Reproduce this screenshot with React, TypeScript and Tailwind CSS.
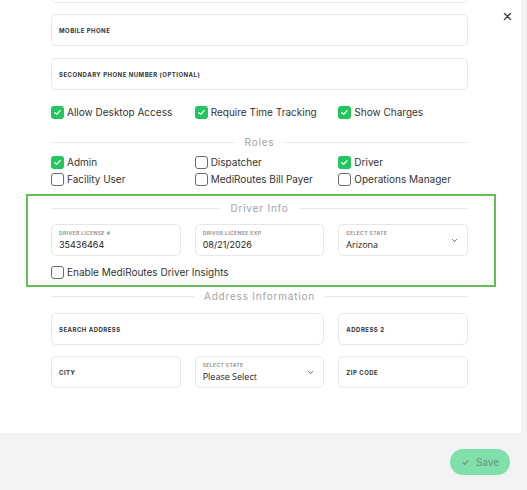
import React from 'react';

const font = { fontFamily: 'Inter, "Liberation Sans", sans-serif' };

const Check = ({ on }: { on?: boolean }) => (
  <span
    className={`flex h-[13px] w-[13px] shrink-0 items-center justify-center rounded-[3px] ${
      on ? 'bg-[#22c55e]' : 'border border-[#6b6b6b] bg-white'
    }`}
  >
    {on && (
      <svg viewBox="0 0 12 12" className="h-[9px] w-[9px]" fill="none" stroke="white" strokeWidth="1.8" strokeLinecap="round" strokeLinejoin="round">
        <path d="M2.5 6.2l2.3 2.3 4.7-5" />
      </svg>
    )}
  </span>
);

const CheckItem = ({ label, on }: { label: string; on?: boolean }) => (
  <label className="flex h-[13px] items-center gap-[3px] text-[10px] leading-[13px] text-[#333]">
    <Check on={on} />
    <span>{label}</span>
  </label>
);

const Divider = ({ title }: { title: string }) => (
  <div className="flex h-[14px] items-center gap-[10px]">
    <div className="h-px flex-1 bg-[#e8e8e8]" />
    <span className="text-[10px] leading-[14px] tracking-[0.08em] text-[#a3a3a3]">{title}</span>
    <div className="h-px flex-1 bg-[#e8e8e8]" />
  </div>
);

const Field = ({ label, className = '' }: { label: string; className?: string }) => (
  <div className={`flex h-[32px] items-center rounded-[5px] border border-[#e6e6e6] bg-white px-[7px] ${className}`}>
    <span className="text-[6px] font-bold tracking-[0.08em] text-[#333]">{label}</span>
  </div>
);

const ValueField = ({ label, value, select }: { label: string; value: string; select?: boolean }) => (
  <div className="relative flex h-[32px] flex-col justify-center rounded-[5px] border border-[#e6e6e6] bg-white px-[7px]">
    <span className="text-[5px] font-semibold leading-[6px] tracking-[0.08em] text-[#888]">{label}</span>
    <span
      className="mt-[4px] text-[9px] leading-[10px] text-[#222]"
      style={select ? { fontFamily: '"Open Sans", "Liberation Sans", sans-serif' } : undefined}
    >
      {value}
    </span>
    {select && (
      <svg viewBox="0 0 10 10" className="absolute right-[9px] top-[12px] h-[7px] w-[7px]" fill="none" stroke="#555" strokeWidth="1.3" strokeLinecap="round" strokeLinejoin="round">
        <path d="M2 3.5l3 3 3-3" />
      </svg>
    )}
  </div>
);

export default function App() {
  return (
    <div className="flex h-[490px] w-[527px] flex-col overflow-hidden bg-[#f3f3f3]" style={font}>
      <div className="relative h-[433px] w-[521px] shrink-0 overflow-hidden bg-white">
        <button className="absolute left-[503px] top-[12px] text-[#333]">
          <svg viewBox="0 0 10 10" className="h-[9px] w-[9px]" fill="none" stroke="#333" strokeWidth="1.4" strokeLinecap="round">
            <path d="M1.5 1.5l7 7M8.5 1.5l-7 7" />
          </svg>
        </button>

        <div className="mt-[-29px] flex flex-col">
          <div className="mx-[51px] w-[417px]">
            <Field label="" />
            <Field label="MOBILE PHONE" className="mt-[11px]" />
            <Field label="SECONDARY PHONE NUMBER (OPTIONAL)" className="mt-[12px]" />

            <div className="mt-[16px] grid grid-cols-3 gap-x-[14px]">
              <CheckItem label="Allow Desktop Access" on />
              <CheckItem label="Require Time Tracking" on />
              <CheckItem label="Show Charges" on />
            </div>

            <div className="mt-[16px]">
              <Divider title="Roles" />
            </div>

            <div className="mt-[7px] grid grid-cols-3 gap-x-[14px] gap-y-[4px]">
              <CheckItem label="Admin" on />
              <CheckItem label="Dispatcher" />
              <CheckItem label="Driver" on />
              <CheckItem label="Facility User" />
              <CheckItem label="MediRoutes Bill Payer" />
              <CheckItem label="Operations Manager" />
            </div>
          </div>

          <div className="ml-[26px] mt-[8px] w-[470px] border-2 border-[#63bf55] pb-[6px] pl-[23px] pr-[26px] pt-[5px]">
            <Divider title="Driver Info" />
            <div className="mt-[9px] grid grid-cols-3 gap-x-[14px]">
              <ValueField label="DRIVER LICENSE #" value="35436464" />
              <ValueField label="DRIVER LICENSE EXP" value="08/21/2026" />
              <ValueField label="SELECT STATE" value="Arizona" select />
            </div>
            <div className="mt-[10px]">
              <CheckItem label="Enable MediRoutes Driver Insights" />
            </div>
          </div>

          <div className="mx-[51px] w-[417px]">
            <div className="mt-[2px]">
              <Divider title="Address Information" />
            </div>
            <div className="mt-[10px] grid grid-cols-3 gap-x-[14px]">
              <Field label="SEARCH ADDRESS" className="col-span-2" />
              <Field label="ADDRESS 2" />
            </div>
            <div className="mt-[11px] grid grid-cols-3 gap-x-[14px]">
              <Field label="CITY" />
              <ValueField label="SELECT STATE" value="Please Select" select />
              <Field label="ZIP CODE" />
            </div>
          </div>
        </div>
      </div>

      <div className="flex justify-end pr-[17px] pt-[16px]">
        <button className="flex h-[26px] w-[60px] items-center justify-center gap-[6px] rounded-full bg-[#7fe0ab] text-[10px] text-[#6f8f7e]">
          <svg viewBox="0 0 12 12" className="h-[9px] w-[9px]" fill="none" stroke="#6f8f7e" strokeWidth="1.5" strokeLinecap="round" strokeLinejoin="round">
            <path d="M2.5 6.2l2.3 2.3 4.7-5" />
          </svg>
          Save
        </button>
      </div>
    </div>
  );
}
